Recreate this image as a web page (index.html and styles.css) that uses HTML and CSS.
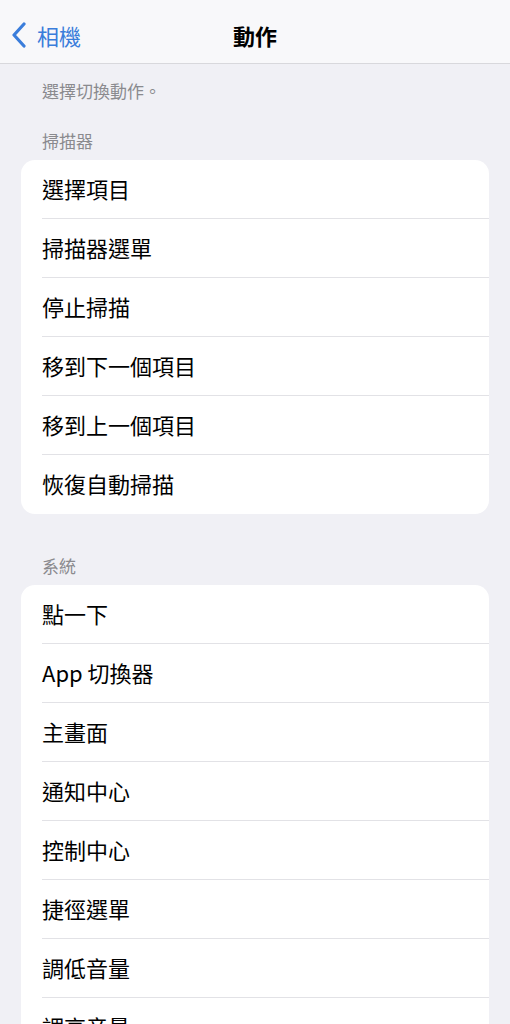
FILE: index.html
```html
<!DOCTYPE html>
<html lang="zh-Hant">
<head>
    <meta charset="UTF-8">
    <meta name="viewport" content="width=device-width, initial-scale=1.0">
    <title>動作</title>
    <link rel="stylesheet" href="styles.css">
</head>
<body>
    <header class="navbar">
        <a class="back" href="#">
            <svg class="chevron" width="16" height="26" viewBox="0 0 16 26">
                <path d="M13 2 L3 13 L13 24" fill="none" stroke="currentColor" stroke-width="3.2" stroke-linecap="round" stroke-linejoin="round"/>
            </svg>
            <span>相機</span>
        </a>
        <h1 class="title">動作</h1>
    </header>

    <main class="content">
        <p class="intro">選擇切換動作。</p>

        <h2 class="section-title">掃描器</h2>
        <ul class="group">
            <li>選擇項目</li>
            <li>掃描器選單</li>
            <li>停止掃描</li>
            <li>移到下一個項目</li>
            <li>移到上一個項目</li>
            <li>恢復自動掃描</li>
        </ul>

        <h2 class="section-title spaced">系統</h2>
        <ul class="group">
            <li>點一下</li>
            <li>App 切換器</li>
            <li>主畫面</li>
            <li>通知中心</li>
            <li>控制中心</li>
            <li>捷徑選單</li>
            <li>調低音量</li>
            <li>調高音量</li>
        </ul>
    </main>
</body>
</html>
```

FILE: styles.css
```css
body {
    margin: 0;
    background-color: #f0f0f5;
    font-family: "Noto Sans CJK TC", "Noto Sans", sans-serif;
    color: #000;
}

.navbar {
    position: relative;
    height: 63px;
    background-color: #f8f8fa;
    border-bottom: 1px solid #d8d8dc;
    display: flex;
    align-items: center;
    justify-content: center;
}

.back {
    position: absolute;
    left: 11px;
    top: 0;
    height: 70px;
    display: flex;
    align-items: center;
    gap: 10px;
    color: #3a7ddb;
    text-decoration: none;
    font-size: 22px;
}

.back span {
    line-height: 1;
}

.title {
    margin: 0;
    font-size: 22px;
    font-weight: 700;
    line-height: 1;
    padding-top: 6px;
}

.content {
    padding: 0 21px;
}

.intro {
    margin: 0;
    padding: 17px 0 0 21px;
    font-size: 17px;
    line-height: 20px;
    color: #8a8a8e;
}

.section-title {
    margin: 0;
    padding: 30px 0 9px 21px;
    font-size: 17px;
    font-weight: 400;
    line-height: 20px;
    color: #8a8a8e;
}

.section-title.spaced {
    padding-top: 42px;
}

.group {
    list-style: none;
    margin: 0;
    padding: 0;
    background-color: #fff;
    border-radius: 14px;
    overflow: hidden;
}

.group li {
    position: relative;
    box-sizing: border-box;
    height: 59px;
    padding: 0 0 3px 21px;
    display: flex;
    align-items: center;
    font-size: 22px;
}

.group li:not(:last-child)::after {
    content: "";
    position: absolute;
    left: 21px;
    right: 0;
    bottom: 0;
    border-top: 1px solid #e2e2e6;
}
```
